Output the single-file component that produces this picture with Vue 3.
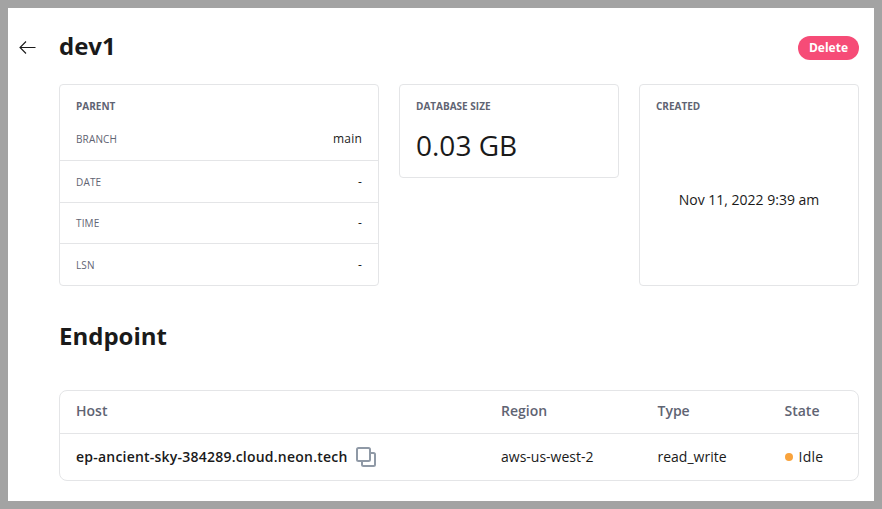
<script setup>
const parentRows = [
  { label: 'BRANCH', value: 'main' },
  { label: 'DATE', value: '-' },
  { label: 'TIME', value: '-' },
  { label: 'LSN', value: '-' },
]
const endpoint = {
  host: 'ep-ancient-sky-384289.cloud.neon.tech',
  region: 'aws-us-west-2',
  type: 'read_write',
  state: 'Idle',
}
</script>

<template>
  <main class="page">
    <header class="header">
      <svg class="back" width="17" height="14" viewBox="0 0 17 14" fill="none">
        <path d="M16.5 6.5H1M7 .5L1 6.5L7 12.5" stroke="#1a1a1a" stroke-width="1.1" />
      </svg>
      <h1 class="title">dev1</h1>
      <button class="delete">Delete</button>
    </header>

    <section class="cards">
      <div class="card parent">
        <h2 class="card-label">PARENT</h2>
        <div class="rows">
          <div v-for="row in parentRows" :key="row.label" class="row">
            <span class="row-label">{{ row.label }}</span>
            <span class="row-value">{{ row.value }}</span>
          </div>
        </div>
      </div>
      <div class="card size">
        <h2 class="card-label">DATABASE SIZE</h2>
        <div class="size-value">0.03 GB</div>
      </div>
      <div class="card created">
        <h2 class="card-label">CREATED</h2>
        <div class="created-value">Nov 11, 2022 9:39 am</div>
      </div>
    </section>

    <h2 class="section-title">Endpoint</h2>

    <section class="table">
      <div class="tr head">
        <span>Host</span>
        <span>Region</span>
        <span>Type</span>
        <span>State</span>
      </div>
      <div class="tr body">
        <span class="host">
          <span class="host-name">{{ endpoint.host }}</span>
          <svg class="copy" width="20" height="20" viewBox="0 0 20 20" fill="none" stroke="#8f99a6" stroke-width="2">
            <rect x="1" y="1" width="13" height="13" rx="1.5" />
            <path d="M14 6H17.5Q19 6 19 7.5V17.5Q19 19 17.5 19H7.5Q6 19 6 17.5V14" />
          </svg>
        </span>
        <span>{{ endpoint.region }}</span>
        <span>{{ endpoint.type }}</span>
        <span class="state"><i class="dot"></i><span>{{ endpoint.state }}</span></span>
      </div>
    </section>
  </main>
</template>

<style>
body {
  margin: 0;
}
</style>

<style scoped>
.page {
  box-sizing: border-box;
  width: 882px;
  height: 509px;
  padding: 0 15px 0 51px;
  border: 8px solid #a3a3a3;
  background: #fff;
  color: #1a1a1a;
  font-family: "Open Sans", "Noto Sans", sans-serif;
  font-size: 14px;
  overflow: hidden;
}
.header {
  display: flex;
  align-items: center;
  height: 76px;
  padding-top: 4px;
  box-sizing: border-box;
  margin-left: -40px;
}
.back {
  flex: none;
  margin-right: 23px;
}
.title,
.section-title {
  margin: 0;
  font-size: 24px;
  font-weight: 700;
  line-height: 32px;
}
.title {
  margin-top: -5px;
}
.delete {
  margin-left: auto;
  width: 61px;
  height: 24px;
  padding: 0;
  border: 0;
  border-radius: 12px;
  background: #f64c77;
  color: #fff;
  font: 700 12px/24px "Open Sans", sans-serif;
}
.cards {
  display: grid;
  grid-template-columns: 320px 220px 220px;
  gap: 20px;
  height: 202px;
}
.card {
  box-sizing: border-box;
  display: flex;
  flex-direction: column;
  padding-top: 14px;
  border: 1px solid #e4e5e7;
  border-radius: 4px;
}
.card-label {
  margin: 0;
  padding: 0 16px;
  color: #5f6473;
  font-size: 10px;
  font-weight: 700;
  line-height: 14px;
}
.rows {
  flex: 1;
  display: grid;
  grid-template-rows: 47px 42px 41px 1fr;
}
.row {
  display: flex;
  align-items: center;
  justify-content: space-between;
  padding: 0 16px;
}
.row:first-child {
  padding-top: 5px;
}
.row + .row {
  border-top: 1px solid #e4e5e7;
}
.row-label {
  color: #5f6473;
  font-size: 10px;
  font-weight: 500;
  letter-spacing: 0.15px;
}
.row-value {
  padding-bottom: 1px;
  font-size: 12px;
  font-weight: 500;
  letter-spacing: 0.2px;
}
.size {
  height: 94px;
}
.size-value {
  padding: 14px 16px 0;
  font-size: 28px;
  line-height: 36px;
}
.created-value {
  flex: 1;
  display: flex;
  align-items: center;
  justify-content: center;
}
.section-title {
  margin: 34px 0 38px;
}
.table {
  box-sizing: border-box;
  height: 91px;
  border: 1px solid #e4e5e7;
  border-radius: 8px;
}
.tr {
  box-sizing: border-box;
  display: grid;
  grid-template-columns: 425px 156.5px 127px 1fr;
  align-items: center;
  height: 46px;
  padding-left: 16px;
}
.head {
  height: 43px;
  padding-bottom: 3px;
  border-bottom: 1px solid #e4e5e7;
  color: #5f6473;
  font-weight: 600;
}
.body span {
  line-height: 20px;
  padding-bottom: 1px;
}
.body .host,
.body .state {
  padding-bottom: 0;
}
.host {
  display: flex;
  align-items: center;
  gap: 8px;
  font-weight: 600;
}
.host-name {
  letter-spacing: 0.22px;
}
.state {
  display: flex;
  align-items: center;
  gap: 6px;
  font-weight: 500;
  letter-spacing: 0.25px;
}
.dot {
  width: 8px;
  height: 8px;
  border-radius: 50%;
  background: #f9a33c;
}
</style>
